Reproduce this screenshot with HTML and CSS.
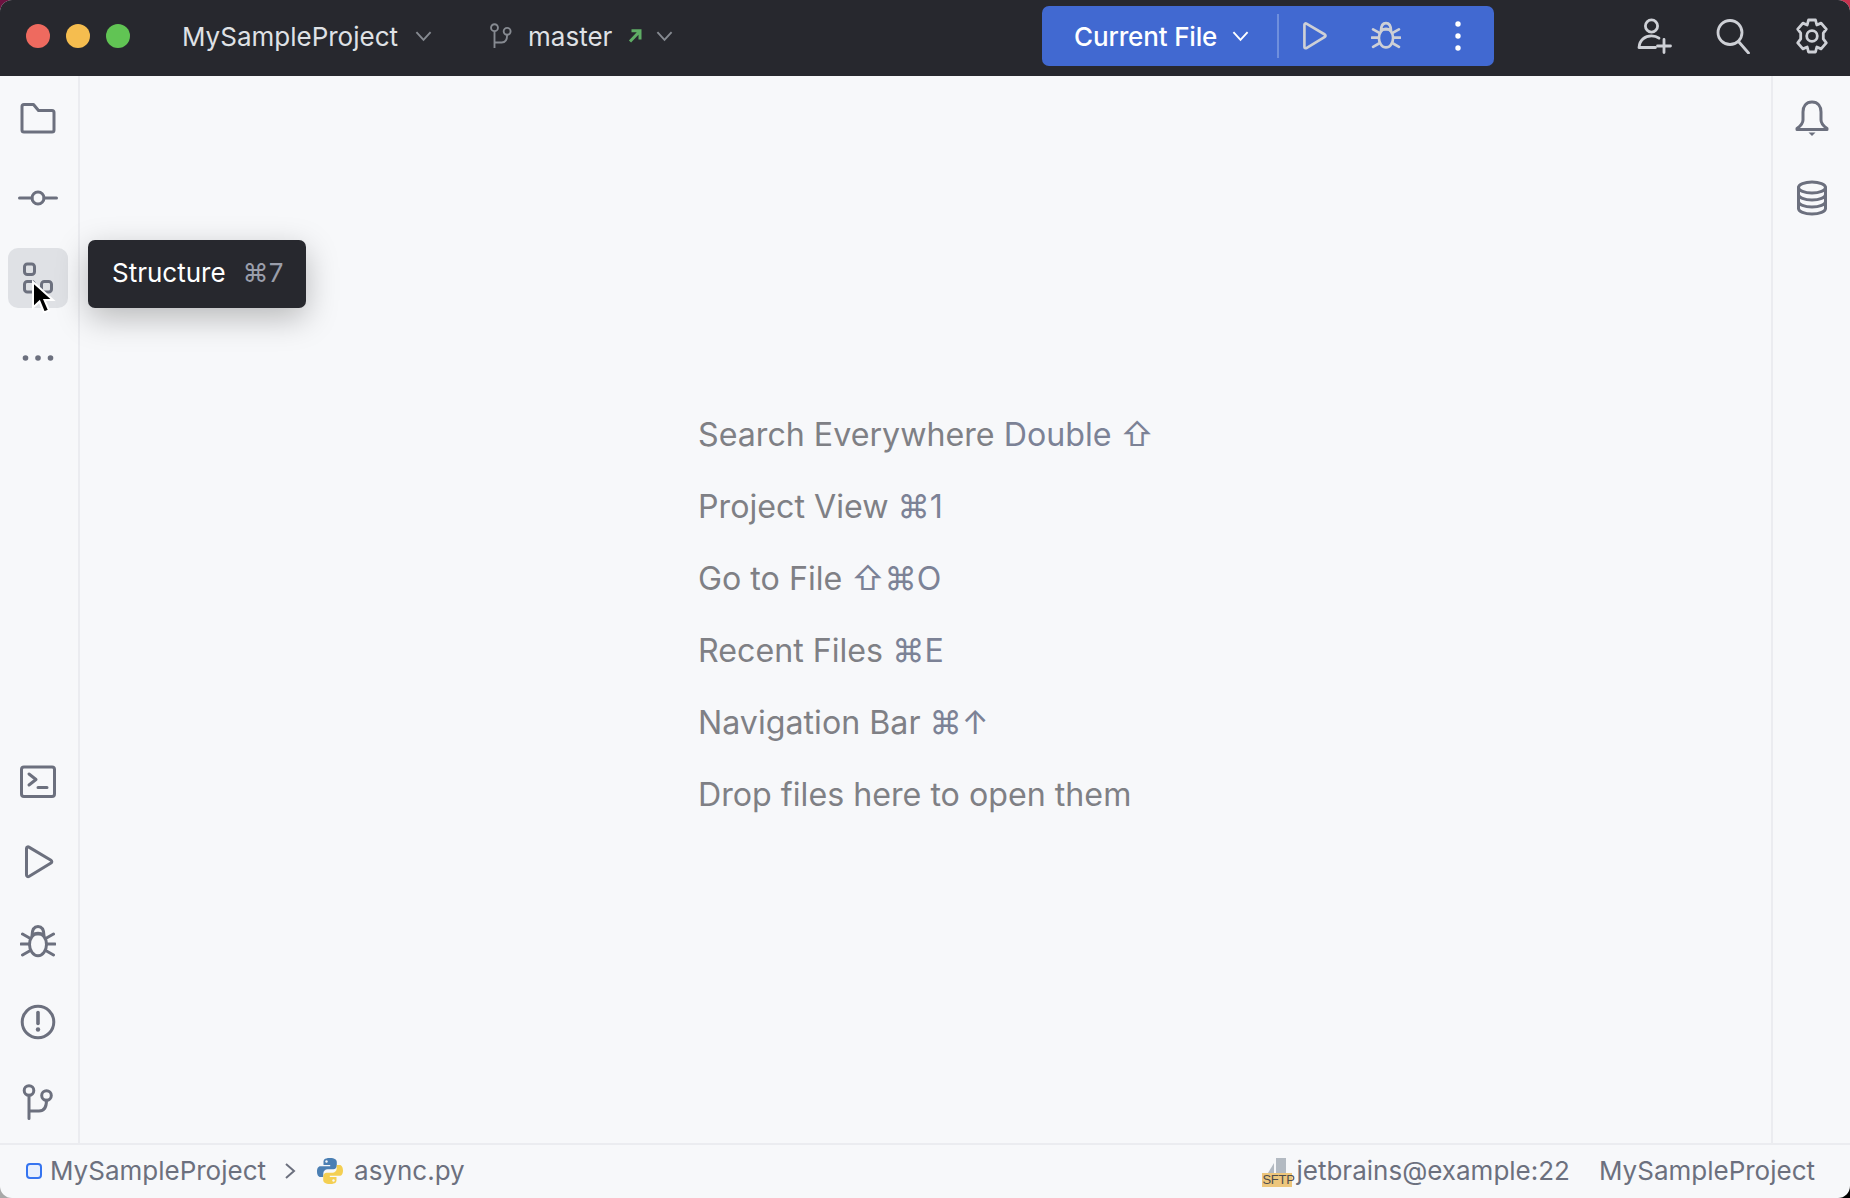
FILE: index.html
```html
<!DOCTYPE html>
<html lang="en">
<head>
<meta charset="utf-8">
<title>MySampleProject</title>
<link rel="stylesheet" href="styles.css">
</head>
<body>
<svg class="sprites" width="0" height="0" aria-hidden="true">
  <defs>
    <symbol id="i-bug" viewBox="0 0 36 36">
      <path d="M12 12C12 5 15 2.500 18 2.500S24 5 24 12"/>
      <path d="M12.500 10h11"/>
      <ellipse cx="18" cy="20.500" rx="8.500" ry="11.200"/>
      <path d="M1 20h8M27 20h8M2.500 10l7 4M33.500 10l-7 4M2.500 31l7-4M33.500 31l-7-4"/>
    </symbol>
    <symbol id="i-play" viewBox="0 0 36 36">
      <path d="M6.500 4.500c0-1.300 1.300-2 2.400-1.400L31 16.200c1.100.7 1.100 2.200 0 2.900L8.900 32.500c-1.100.6-2.400-.1-2.400-1.400z"/>
    </symbol>
    <symbol id="i-branch" viewBox="0 0 36 36">
      <circle cx="9" cy="6.500" r="4.800"/>
      <circle cx="26.500" cy="11.500" r="4.800"/>
      <path d="M9 11.300V34.500M9 27h10c4.500 0 7.500-3.500 7.500-10.700"/>
    </symbol>
  </defs>
</svg>
<div class="window">
  <header class="titlebar">
    <div class="lights">
      <span class="light red"></span>
      <span class="light yellow"></span>
      <span class="light green"></span>
    </div>
    <div class="project-switch">
      <span class="title-text">MySampleProject</span>
      <svg class="chev" viewBox="0 0 18 12"><path d="M1.500 2l7.500 8 7.500-8"/></svg>
    </div>
    <div class="branch-switch">
      <svg class="branch-icon" viewBox="0 0 36 36"><use href="#i-branch"/></svg>
      <span class="title-text">master</span>
      <svg class="push-arrow" viewBox="0 0 16 16"><path d="M3 13.500 12.500 3.500M4.500 2.800H13V11.500"/></svg>
      <svg class="chev" viewBox="0 0 18 12"><path d="M1.500 2l7.500 8 7.500-8"/></svg>
    </div>
    <div class="run-widget">
      <div class="run-config">
        <span class="run-label">Current File</span>
        <svg class="chev chev-white" viewBox="0 0 18 12"><path d="M1.500 2l7.500 8 7.500-8"/></svg>
      </div>
      <span class="run-sep"></span>
      <svg class="light-icon run-btn" viewBox="0 0 36 36"><use href="#i-play"/></svg>
      <svg class="light-icon bug-btn" viewBox="0 0 36 36"><use href="#i-bug"/></svg>
      <svg class="kebab" viewBox="0 0 8 32"><circle cx="4" cy="4" r="2.700"/><circle cx="4" cy="16" r="2.700"/><circle cx="4" cy="28" r="2.700"/></svg>
    </div>
    <div class="title-actions">
      <svg class="light-icon" viewBox="0 0 36 36"><circle cx="15.500" cy="8" r="6.100"/><path d="M23 20.200c-2-1.500-4.700-2.300-7.500-2.300C9 17.900 3.500 22 3 29.500h16.500"/><path d="M28 21.500v13M21.500 28h13"/></svg>
      <svg class="light-icon" viewBox="0 0 36 36"><circle cx="15" cy="14.500" r="12"/><path d="M23.500 23.500 33.500 35"/></svg>
      <svg class="light-icon" viewBox="0 0 36 36"><path d="M14.500 2h7l1.300 5 4.300-1.900 5.200 6-3 4 .0 5.800 3 4-5.200 6-4.300-1.900-1.300 5h-7l-1.300-5-4.300 1.900-5.200-6 3-4v-5.800l-3-4 5.200-6 4.300 1.900z"/><circle cx="18" cy="18" r="5.300"/></svg>
    </div>
  </header>

  <div class="body-row">
    <nav class="stripe stripe-left">
      <div class="stripe-group">
        <div class="tool"><svg class="dark-icon" viewBox="0 0 36 36"><path d="M2 6.500c0-1.200.8-2 2-2h9.500l5 6H32c1.200 0 2 .8 2 2V30c0 1.200-.8 2-2 2H4c-1.200 0-2-.8-2-2z"/></svg></div>
        <div class="tool"><svg class="dark-icon" viewBox="0 0 36 36"><circle cx="18" cy="18" r="6"/><path d="M-.5 18h12.500M24 18h12.500"/></svg></div>
        <div class="tool tool-active">
          <svg class="dark-icon" viewBox="0 0 36 36"><rect x="4.500" y="4" width="10" height="10.500" rx="2.800"/><rect x="4.500" y="21.500" width="10" height="10.500" rx="2.800"/><rect x="21.500" y="21.500" width="10" height="10.500" rx="2.800"/></svg>
          <div class="tooltip"><span class="tip-name">Structure</span><span class="tip-key">⌘7</span></div>
          <svg class="cursor" viewBox="0 0 26 36"><path d="M3 2v25.500l6.500-6 4.500 11 5-2.200-4.500-10.300h8.500z"/></svg>
        </div>
        <div class="tool"><svg class="dark-icon dots" viewBox="0 0 36 36"><circle cx="5.500" cy="18" r="2.800"/><circle cx="18" cy="18" r="2.800"/><circle cx="30.500" cy="18" r="2.800"/></svg></div>
      </div>
      <div class="stripe-group">
        <div class="tool"><svg class="dark-icon" viewBox="0 0 36 36"><rect x="1.500" y="3" width="33" height="29.500" rx="2.500"/><path d="M9 10l7 5.500-7 5.500M18 23.500h9"/></svg></div>
        <div class="tool"><svg class="dark-icon" viewBox="0 0 36 36"><use href="#i-play"/></svg></div>
        <div class="tool"><svg class="dark-icon" viewBox="0 0 36 36"><use href="#i-bug"/></svg></div>
        <div class="tool"><svg class="dark-icon" viewBox="0 0 36 36"><circle cx="18" cy="18" r="15.800"/><path class="bang" d="M18 8.500v11"/><circle class="dot" cx="18" cy="25.500" r="2.200"/></svg></div>
        <div class="tool"><svg class="dark-icon" viewBox="0 0 36 36"><use href="#i-branch"/></svg></div>
      </div>
    </nav>

    <main class="editor">
      <ul class="hints">
        <li>Search Everywhere <span class="key">Double ⇧</span></li>
        <li>Project View <span class="key">⌘1</span></li>
        <li>Go to File <span class="key">⇧⌘O</span></li>
        <li>Recent Files <span class="key">⌘E</span></li>
        <li>Navigation Bar <span class="key">⌘↑</span></li>
        <li>Drop files here to open them</li>
      </ul>
    </main>

    <nav class="stripe stripe-right">
      <div class="stripe-group">
        <div class="tool"><svg class="dark-icon" viewBox="0 0 36 36"><path d="M18 2c-6 0-9 4.500-9 10v8c0 3-2.500 6-6 8.500v1h30v-1c-3.500-2.500-6-5.500-6-8.500v-8c0-5.500-3-10-9-10z"/><path class="solid" d="M14.500 32.500h7L18 36z"/></svg></div>
        <div class="tool"><svg class="dark-icon" viewBox="0 0 36 36"><ellipse cx="18" cy="7.500" rx="13.500" ry="5.500"/><path d="M4.500 7.500v21c0 3 6 5.500 13.500 5.500s13.500-2.500 13.500-5.500v-21M4.500 14.500c0 3 6 5.500 13.500 5.500s13.500-2.500 13.500-5.500M4.500 21.500c0 3 6 5.500 13.500 5.500s13.500-2.500 13.500-5.500"/></svg></div>
      </div>
    </nav>
  </div>

  <footer class="statusbar">
    <div class="crumbs">
      <span class="module-box"></span>
      <span>MySampleProject</span>
      <svg class="crumb-sep" viewBox="0 0 12 18"><path d="M2 2l8 7-8 7"/></svg>
      <svg class="py-icon" viewBox="0 0 28 28">
        <path fill="#4b7fb3" d="M13.800 1C8 1 7.500 3.300 7.500 5v3h6.700v1.200H4.500C2 9.200 1 11.500 1 14.500s1.200 5.500 3.500 5.500h2.800v-3.500c0-2.500 2-4.300 4.300-4.300h5.700c2 0 3.500-1.600 3.500-3.500V5c0-2-1.800-4-7-4z"/>
        <path fill="#f4cf52" d="M14.200 27c5.800 0 6.300-2.300 6.300-4v-3h-6.700v-1.200h9.700c2.500 0 3.500-2.300 3.500-5.300S25.800 8 23.500 8h-2.800v3.500c0 2.500-2 4.300-4.300 4.300h-5.700c-2 0-3.500 1.600-3.500 3.500V23c0 2 1.800 4 7 4z"/>
        <circle cx="10.500" cy="4.500" r="1.200" fill="#f7f8fa"/><circle cx="17.500" cy="23.500" r="1.200" fill="#f7f8fa"/>
      </svg>
      <span>async.py</span>
    </div>
    <div class="status-right">
      <span class="sftp-wrap">
        <svg class="sftp-file" viewBox="0 0 20 15"><path d="M8 5v10H2zM10 0h10v15H10z"/></svg>
        <span class="sftp-badge">SFTP</span>
      </span>
      <span>jetbrains@example:22</span>
      <span class="status-project">MySampleProject</span>
    </div>
  </footer>
</div>
</body>
</html>
```
FILE: styles.css
```css
* { box-sizing: border-box; }
html, body { margin: 0; padding: 0; width: 1850px; height: 1198px; overflow: hidden; }
body { background: conic-gradient(#c8324f 0 90deg, #000 90deg 180deg, #a8a8a8 180deg 270deg, #6d1240 270deg 360deg); }
.sprites { position: absolute; }
.window {
  width: 1850px; height: 1198px; display: flex; flex-direction: column;
  background: #f7f8fa; border-radius: 12px; overflow: hidden;
  font-family: Inter, "Noto Sans", sans-serif;
}
.titlebar {
  height: 76px; flex: none; display: flex; align-items: center;
  background: #27282e; padding-left: 26px; padding-bottom: 4px; position: relative;
}
.lights { display: flex; gap: 16px; }
.light { width: 24px; height: 24px; border-radius: 50%; }
.red { background: #ee6a5f; }
.yellow { background: #f5bd4f; }
.green { background: #61c454; }
.title-text { font-size: 26px; color: #dfe1e5; line-height: 36px; white-space: nowrap; margin-top: 2px; }
.project-switch { display: flex; align-items: center; gap: 17px; margin-left: 52px; }
.branch-switch { display: flex; align-items: center; margin-left: 56px; }
.branch-icon { width: 26px; height: 30px; fill: none; stroke: #868a91; stroke-width: 2.600; margin-right: 14px; }
.push-arrow { width: 16px; height: 16px; fill: none; stroke: #5fad65; stroke-width: 3; margin-left: 15px; margin-right: 13px; }
.chev { width: 17px; height: 12px; fill: none; stroke: #868a91; stroke-width: 2; }
.chev-white { stroke: #fff; }
.run-widget {
  position: absolute; left: 1042px; top: 6px; width: 452px; height: 60px;
  display: flex; align-items: center; background: #4169d1; border-radius: 7px;
  padding-left: 32px;
}
.run-config { display: flex; align-items: center; gap: 15px; width: 203px; }
.run-label { font-size: 26px; line-height: 36px; color: #fff; font-weight: 500; letter-spacing: -.15px; white-space: nowrap; margin-top: 2px; }
.run-sep { width: 2px; height: 44px; background: #6f8fdd; }
.light-icon { width: 36px; height: 36px; fill: none; stroke: #ced0d6; stroke-width: 2.800; stroke-linecap: round; stroke-linejoin: round; }
.run-btn, .bug-btn { width: 30px; height: 30px; stroke-width: 3.200; }
.run-btn { margin-left: 20px; }
.bug-btn { margin-left: 42px; }
.kebab { width: 8px; height: 32px; fill: #fff; margin-left: 53px; }
.title-actions { position: absolute; left: 1636px; top: 18px; display: flex; gap: 43px; }

.body-row { flex: 1; display: flex; min-height: 0; }
.stripe { width: 79px; flex: none; display: flex; flex-direction: column; justify-content: space-between; padding-top: 12px; padding-bottom: 11px; }
.stripe-left { width: 80px; padding-right: 2px; border-right: 2px solid #ebecf0; }
.stripe-right { border-left: 2px solid #ebecf0; }
.stripe-group { display: flex; flex-direction: column; gap: 20px; align-items: center; }
.tool { width: 60px; height: 60px; display: flex; align-items: center; justify-content: center; border-radius: 10px; position: relative; }
.tool-active { background: #dfe1e5; }
.dark-icon { width: 36px; height: 36px; fill: none; stroke: #6c707e; stroke-width: 3; stroke-linecap: round; stroke-linejoin: round; overflow: visible; }
.dark-icon.dots { fill: #6c707e; stroke: none; }
.dark-icon .solid { fill: #6c707e; stroke: none; }
.dark-icon .dot { fill: #6c707e; stroke: none; }
.dark-icon .bang { stroke-width: 3.600; }
.tooltip {
  position: absolute; left: 80px; top: -8px; width: 218px; height: 68px;
  display: flex; align-items: center; gap: 17px; padding-left: 24px; padding-bottom: 3px; background: #27282e;
  border-radius: 7px; box-shadow: 0 10px 32px rgba(0, 0, 0, .26); white-space: nowrap; z-index: 2;
}
.tip-name { font-size: 26px; color: #fff; }
.tip-key { font-size: 26px; color: #9a9eab; }
.cursor { position: absolute; left: 22px; top: 32px; width: 26px; height: 36px; fill: #000; stroke: #fff; stroke-width: 2; z-index: 3; }

.editor { flex: 1; min-width: 0; position: relative; padding-left: 618px; padding-top: 335px; }
.hints { list-style: none; margin: 0; padding: 0; display: flex; flex-direction: column; gap: 24px; }
.hints li { font-size: 32.200px; line-height: 48px; color: #7f8085; white-space: nowrap; }
.key { color: #7c8296; }

.statusbar {
  height: 55px; flex: none; display: flex; align-items: center; justify-content: space-between;
  border-top: 2px solid #ebecf0; padding-left: 26px; padding-right: 35px; padding-bottom: 2px;
  font-size: 26px; color: #6c707e;
}
.crumbs { display: flex; align-items: center; }
.module-box { width: 16px; height: 16px; border: 2.500px solid #3574f0; background: #e7effd; border-radius: 4px; margin-right: 8px; }
.crumb-sep { width: 12px; height: 18px; fill: none; stroke: #6c707e; stroke-width: 2; margin-left: 18px; margin-right: 20px; }
.py-icon { width: 28px; height: 28px; margin-right: 10px; }
.status-right { display: flex; align-items: center; }
.sftp-wrap { position: relative; width: 30px; height: 29px; margin-right: 4px; margin-top: 4px; }
.sftp-file { position: absolute; left: 4px; top: 0; width: 20px; height: 15px; fill: #b3bac2; }
.sftp-badge {
  position: absolute; left: 0; bottom: 0; width: 30px; height: 14px; background: #edc67c; color: #4d4d4d;
  font-family: "Liberation Sans", sans-serif; font-size: 13px; line-height: 14px; text-align: center; letter-spacing: -.3px;
}
.status-project { margin-left: 29px; }
```
